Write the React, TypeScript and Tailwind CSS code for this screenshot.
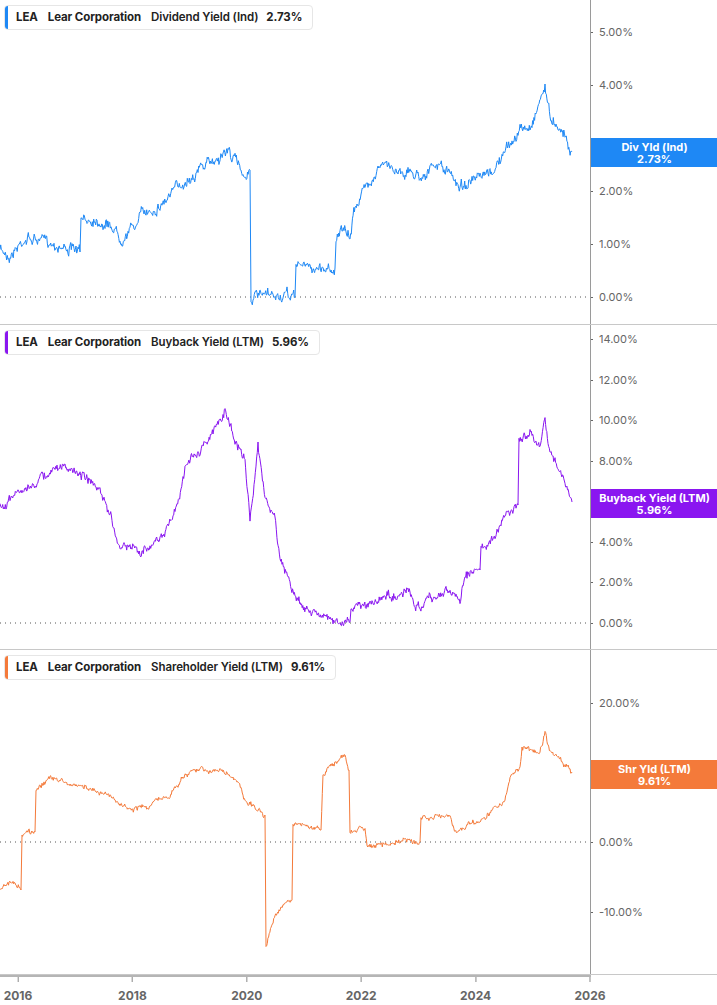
import React from 'react';

type Pt = [number, number];

function rng(seed: number) {
  let s = seed;
  return () => {
    s = (s * 16807) % 2147483647;
    return s / 2147483647;
  };
}

// build a noisy polyline from key points (global y, offset by panel top)
function buildPath(keys: Pt[], top: number, amp: number, seed: number) {
  const r = rng(seed);
  const out: string[] = [];
  let drift = 0;
  for (let i = 0; i < keys.length - 1; i++) {
    const [x0, y0] = keys[i];
    const [x1, y1] = keys[i + 1];
    if (x1 - x0 < 1.5) {
      out.push(`${x0},${y0 - top}`);
      continue;
    }
    const steps = Math.max(1, Math.round((x1 - x0) * 1.5));
    for (let k = 0; k < steps; k++) {
      const t = k / steps;
      const x = x0 + (x1 - x0) * t;
      drift = drift * 0.8 + (r() - 0.5) * amp;
      const y = y0 + (y1 - y0) * t + drift + (r() - 0.5) * amp;
      out.push(`${x.toFixed(1)},${(y - top).toFixed(1)}`);
    }
  }
  const last = keys[keys.length - 1];
  out.push(`${last[0]},${last[1] - top}`);
  return 'M' + out.join(' L');
}

const divKeys: Pt[] = [
  [0, 250], [10, 255], [25, 238], [50, 242], [80, 252], [81, 222], [95, 218], [115, 228], [120, 238],
  [138, 222], [140, 215], [160, 205], [180, 185], [200, 168], [215, 160], [228, 150], [235, 160],
  [245, 175], [250, 170], [251, 297], [295, 297], [296, 262], [310, 268], [335, 268], [336, 240],
  [340, 230], [350, 238], [355, 205], [370, 180], [380, 165], [400, 170], [420, 175], [440, 165],
  [460, 185], [480, 180], [490, 175], [500, 160], [520, 130], [530, 128], [545, 85], [550, 118],
  [560, 125], [565, 135], [572, 152],
];

const buyKeys: Pt[] = [
  [0, 505], [20, 490], [45, 478], [65, 465], [80, 475], [100, 490], [110, 515], [120, 548], [140, 550],
  [160, 540], [175, 510], [185, 470], [200, 450], [215, 430], [225, 408], [235, 440], [245, 460],
  [250, 520], [258, 445], [265, 500], [275, 520], [280, 560], [290, 578], [295, 600], [310, 610],
  [325, 612], [335, 622], [350, 622], [351, 608], [370, 602], [395, 596], [410, 590], [415, 606],
  [430, 598], [450, 590], [460, 598], [465, 578], [480, 570], [481, 548], [495, 540], [505, 515],
  [518, 505], [519, 440], [530, 432], [540, 445], [545, 418], [548, 450], [555, 460], [560, 470],
  [565, 485], [572, 502],
];

const shrKeys: Pt[] = [
  [0, 890], [15, 882], [21, 890], [22, 835], [35, 832], [36, 790], [50, 780], [70, 782], [90, 790],
  [110, 798], [130, 808], [150, 806], [170, 795], [180, 780], [200, 768], [220, 770], [235, 778],
  [245, 800], [258, 810], [265, 815], [266, 945], [275, 915], [285, 905], [292, 900], [293, 823],
  [320, 830], [321, 830], [323, 775], [340, 760], [345, 755], [349, 770], [350, 828], [365, 830],
  [367, 845], [395, 845], [396, 840], [420, 842], [421, 818], [440, 815], [450, 818], [455, 832],
  [465, 825], [480, 822], [490, 812], [505, 800], [510, 778], [520, 765], [522, 748], [540, 752],
  [545, 735], [550, 750], [560, 760], [565, 765], [572, 772],
];

type Panel = {
  top: number;
  color: string;
  barClass: string;
  tagClass: string;
  name: string;
  value: string;
  tag: string;
  tagY: number;
  zeroY: number;
  ticks: { label: string; y: number }[];
  keys: Pt[];
  amp: number;
  seed: number;
};

const panels: Panel[] = [
  {
    top: 0, color: '#1e88f5', barClass: 'bg-[#1e88f5]', tagClass: 'bg-[#1e88f5]',
    name: 'Dividend Yield (Ind)', value: '2.73%', tag: 'Div Yld (Ind)', tagY: 138, zeroY: 297,
    ticks: [
      { label: '5.00%', y: 32 }, { label: '4.00%', y: 85 },
      { label: '2.00%', y: 191 }, { label: '1.00%', y: 244 }, { label: '0.00%', y: 297 },
    ],
    keys: divKeys, amp: 6, seed: 7,
  },
  {
    top: 325, color: '#8a16f0', barClass: 'bg-[#8a16f0]', tagClass: 'bg-[#8a16f0]',
    name: 'Buyback Yield (LTM)', value: '5.96%', tag: 'Buyback Yield (LTM)', tagY: 489, zeroY: 623,
    ticks: [
      { label: '14.00%', y: 339 }, { label: '12.00%', y: 380 }, { label: '10.00%', y: 420 },
      { label: '8.00%', y: 461 }, { label: '4.00%', y: 542 }, { label: '2.00%', y: 582 },
      { label: '0.00%', y: 623 },
    ],
    keys: buyKeys, amp: 5, seed: 13,
  },
  {
    top: 650, color: '#f47a3a', barClass: 'bg-[#f47a3a]', tagClass: 'bg-[#f47a3a]',
    name: 'Shareholder Yield (LTM)', value: '9.61%', tag: 'Shr Yld (LTM)', tagY: 760, zeroY: 842,
    ticks: [
      { label: '20.00%', y: 703 }, { label: '0.00%', y: 842 },
      { label: '-10.00%', y: 912 },
    ],
    keys: shrKeys, amp: 3, seed: 29,
  },
];

function ChartPanel({ p }: { p: Panel }) {
  const d = buildPath(p.keys, p.top, p.amp, p.seed);
  return (
    <div className="flex h-[325px] border-b border-[#c8c8c8] last:border-b-0">
      <div className="relative w-[590px] h-full">
        <svg width="590" height="325" className="block">
          <line x1="0" x2="590" y1={p.zeroY - p.top} y2={p.zeroY - p.top} stroke="#555" strokeWidth="1" strokeDasharray="1 4" />
          <path d={d} fill="none" stroke={p.color} strokeWidth="1" strokeLinejoin="round" />
        </svg>
        <div className="absolute left-[4px] top-[5px] flex items-center h-[25px] rounded border border-[#e6e6e6] bg-white pr-[10px] text-[11.5px] font-bold text-[#222] tracking-[-0.1px]">
          <div className={`w-[3px] h-full rounded-l ${p.barClass}`} />
          <span className="ml-[8px]">LEA</span>
          <span className="ml-[10px]">Lear Corporation</span>
          <span className="ml-[10px] font-semibold">{p.name}</span>
          <span className="ml-[8px]">{p.value}</span>
        </div>
      </div>
      <div className="relative w-[127px] h-full border-l border-[#9a9a9a]">
        {p.ticks.map((t) => (
          <div key={t.label} className="absolute left-0 flex items-center" style={{ top: t.y - p.top - 7 }}>
            <div className="w-[2px] h-px bg-[#666]" />
            <span className="ml-[6px] text-[11px] leading-[14px] text-[#666]">{t.label}</span>
          </div>
        ))}
        <div
          className={`absolute left-0 w-[127px] h-[29px] flex flex-col items-center justify-center text-white text-[11px] font-bold leading-[12px] ${p.tagClass}`}
          style={{ top: p.tagY - p.top }}
        >
          <span>{p.tag}</span>
          <span>{p.value}</span>
        </div>
      </div>
    </div>
  );
}

export default function App() {
  const years = ['2016', '2018', '2020', '2022', '2024', '2026'];
  return (
    <div className="w-[717px] h-[1005px] bg-white overflow-hidden" style={{ fontFamily: 'Inter, "Noto Sans", sans-serif' }}>
      {panels.map((p) => (
        <ChartPanel key={p.name} p={p} />
      ))}
      <div className="flex h-[30px]">
        <div className="relative w-[591px] border-t-2 border-[#b5b5b5]">
          {years.map((y, i) => (
            <div key={y} className="absolute top-0 flex flex-col items-center -translate-x-1/2" style={{ left: 18 + i * 114.4 }}>
              <div className="w-px h-[5px] bg-[#888]" />
              <span className="mt-[5px] text-[12px] font-bold text-[#666]">{y}</span>
            </div>
          ))}
        </div>
      </div>
    </div>
  );
}
